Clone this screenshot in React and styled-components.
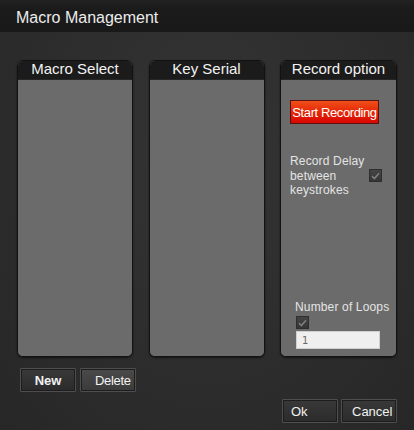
import React from "react";
import styled, { createGlobalStyle } from "styled-components";

const Global = createGlobalStyle`
  html, body { margin: 0; padding: 0; background: #2b2b2b; }
  body { font-family: "Liberation Sans", Arial, sans-serif; }
`;

const Window = styled.div`
  width: 414px;
  height: 430px;
  display: flex;
  flex-direction: column;
  overflow: hidden;
  background: radial-gradient(ellipse at 50% 35%, #343434 0%, #2d2d2d 55%, #272727 100%);
`;

const TitleBar = styled.div`
  height: 32px;
  box-sizing: border-box;
  padding: 9px 0 0 16px;
  background: linear-gradient(#222222, #1b1b1b 25%, #191919);
  color: #ececec;
  font-size: 16px;
  line-height: 18px;
`;

const Panels = styled.div`
  display: grid;
  grid-template-columns: 116px 116px 117px;
  column-gap: 15.5px;
  height: 297px;
  margin: 28px 0 0 17px;
`;

const Panel = styled.section`
  display: flex;
  flex-direction: column;
  box-sizing: border-box;
  border: 1px solid #121212;
  border-radius: 6px;
  overflow: hidden;
  background: #6a6a6a;
  box-shadow: 0 1px 2px rgba(0, 0, 0, 0.55);
`;

const PanelHeader = styled.h2`
  margin: 0;
  height: 18px;
  flex: none;
  background: #1b1b1b;
  border-bottom: 1px solid #262626;
  color: #f2f2f2;
  font-size: 15px;
  font-weight: normal;
  line-height: 16px;
  text-align: center;
`;

const PanelBody = styled.div`
  flex: 1;
  display: flex;
  flex-direction: column;
  align-items: flex-start;
  background: #6b6b6b;
  padding: ${(p) => (p.$options ? "20px 0 7px 9px" : "0")};
`;

const StartButton = styled.button`
  width: 89px;
  height: 24px;
  box-sizing: border-box;
  padding: 0;
  border: 1px solid #5c1010;
  background: linear-gradient(#f0501a, #e62a08 45%, #d80600);
  color: #ffffff;
  font-family: "Liberation Sans", Arial, sans-serif;
  font-size: 13px;
  letter-spacing: -0.4px;
  cursor: pointer;
`;

const DelayRow = styled.div`
  display: flex;
  align-items: center;
  gap: 3px;
  margin-top: 30px;
`;

const OptionLabel = styled.span`
  display: block;
  width: ${(p) => p.$width || "auto"};
  color: #e4e4e4;
  font-size: 12px;
  line-height: 14.5px;
  letter-spacing: 0.15px;
`;

const Spacer = styled.div`
  flex: 1;
`;

const Loops = styled.div`
  display: flex;
  flex-direction: column;
  align-items: flex-start;
  padding-left: 5px;
`;

const CheckBox = styled.span`
  display: inline-flex;
  align-items: center;
  justify-content: center;
  width: 13px;
  height: 13px;
  box-sizing: border-box;
  border: 1px solid #2e2e2e;
  background: linear-gradient(#444444, #353535);
  margin: ${(p) => p.$margin || "0"};
  flex: none;
`;

const LoopInput = styled.input`
  width: 84px;
  height: 18px;
  box-sizing: border-box;
  margin: 2px 0 0 1px;
  padding: 0 0 0 5px;
  border: 1px solid #d0d0d0;
  background: #efefef;
  color: #6a6a6a;
  font-family: "DejaVu Sans", sans-serif;
  font-size: 10px;
  outline: none;
`;

const ButtonRow = styled.div`
  display: flex;
  gap: ${(p) => p.$gap || "4px"};
  justify-content: ${(p) => (p.$end ? "flex-end" : "flex-start")};
  margin: ${(p) => p.$margin};
`;

const Button = styled.button`
  width: 56px;
  height: 24px;
  box-sizing: border-box;
  padding: 0 0 0 ${(p) => p.$indent || "0"};
  border: 1px solid #4e4e4e;
  border-radius: 1px;
  box-shadow: inset 0 0 0 1px #1d1d1d;
  background: ${(p) =>
    p.$light
      ? "linear-gradient(#4a4a4a, #3b3b3b)"
      : "linear-gradient(#393939, #2b2b2b)"};
  color: #f2f2f2;
  font-family: "Liberation Sans", Arial, sans-serif;
  font-size: 13px;
  font-weight: ${(p) => (p.$bold ? "bold" : "normal")};
  letter-spacing: ${(p) => (p.$light ? "-0.3px" : "0")};
  text-align: ${(p) => (p.$indent ? "left" : "center")};
  cursor: pointer;
`;

const Check = () => (
  <svg width="9" height="8" viewBox="0 0 9 8">
    <path d="M1 4.2 L3.4 6.5 L8 1.2" fill="none" stroke="#7e7e7e" strokeWidth="1.6" />
  </svg>
);

export default function App() {
  return (
    <>
      <Global />
      <Window>
        <TitleBar>Macro Management</TitleBar>
        <Panels>
          <Panel>
            <PanelHeader>Macro Select</PanelHeader>
            <PanelBody />
          </Panel>
          <Panel>
            <PanelHeader>Key Serial</PanelHeader>
            <PanelBody />
          </Panel>
          <Panel>
            <PanelHeader>Record option</PanelHeader>
            <PanelBody $options>
              <StartButton>Start Recording</StartButton>
              <DelayRow>
                <OptionLabel $width="76px">Record Delay between keystrokes</OptionLabel>
                <CheckBox>
                  <Check />
                </CheckBox>
              </DelayRow>
              <Spacer />
              <Loops>
                <OptionLabel>Number of Loops</OptionLabel>
                <CheckBox $margin="1.5px 0 0 1px">
                  <Check />
                </CheckBox>
                <LoopInput defaultValue="1" />
              </Loops>
            </PanelBody>
          </Panel>
        </Panels>
        <ButtonRow $margin="11px 0 0 20px">
          <Button $bold>New</Button>
          <Button $light $indent="14px">Delete</Button>
        </ButtonRow>
        <ButtonRow $end $gap="3px" $margin="7px 17px 0 0">
          <Button $indent="8px">Ok</Button>
          <Button $indent="10px">Cancel</Button>
        </ButtonRow>
      </Window>
    </>
  );
}
